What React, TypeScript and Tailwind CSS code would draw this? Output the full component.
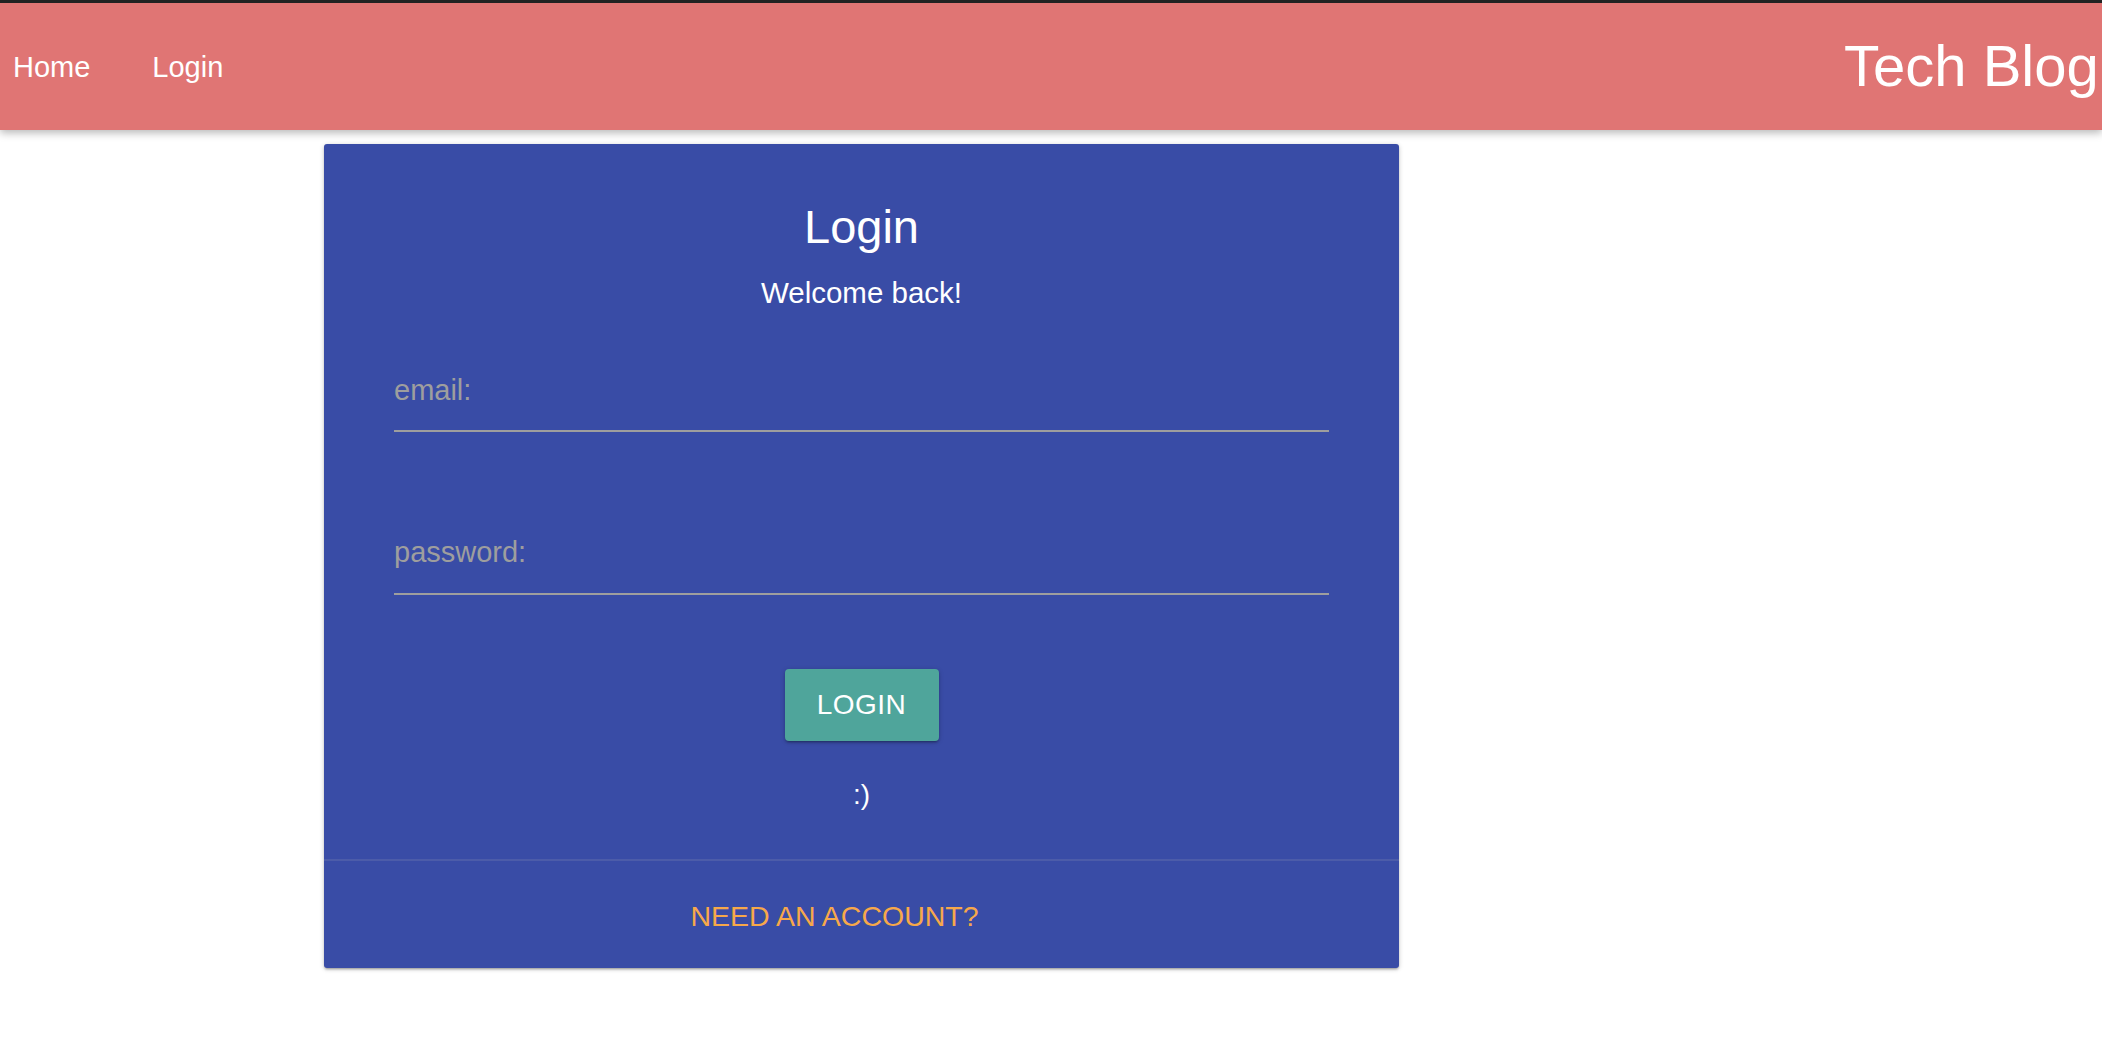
export default function App() {
  const font = { fontFamily: "'Liberation Sans', Arial, sans-serif" };

  return (
    <div className="min-h-[1044px] w-full overflow-hidden bg-white text-white" style={font}>
      <nav className="relative z-10 flex h-[130px] items-center overflow-hidden border-t-[3px] border-[#222222] bg-[#e07574] shadow-[0_3px_8px_rgba(0,0,0,0.28)]">
        <div className="flex items-center gap-[62px] pl-[13px] text-[29px] leading-[34px]">
          <a href="#">Home</a>
          <a href="#">Login</a>
        </div>
        <div className="ml-auto w-[258px] shrink-0 overflow-hidden whitespace-nowrap pb-[2px] text-[58px] leading-[70px]">
          Tech Blog
        </div>
      </nav>

      <div className="ml-[324px] mt-[14px] w-[1075px] rounded-[3px] bg-[#394ca6] shadow-[0_2px_2px_0_rgba(0,0,0,0.14),0_3px_1px_-2px_rgba(0,0,0,0.12),0_1px_5px_0_rgba(0,0,0,0.2)]">
        <div className="flex flex-col items-center px-[70px] pt-[55px]">
          <h5 className="text-[47px] leading-[56px] font-normal">Login</h5>
          <p className="mt-[21px] text-[29.5px] leading-[34px]">Welcome back!</p>

          <div className="mt-[63px] w-full border-b-2 border-[#9e9e9e] pb-[23px]">
            <span className="text-[29px] leading-[34px] text-[#9e9e9e]">email:</span>
          </div>
          <div className="mt-[103px] w-full border-b-2 border-[#9e9e9e] pb-[24px]">
            <span className="text-[29px] leading-[34px] text-[#9e9e9e]">password:</span>
          </div>

          <button className="mt-[74px] flex h-[72px] w-[154px] items-center justify-center rounded-[4px] bg-[#4fa59b] text-[28px] tracking-[0.5px] shadow-[0_2px_2px_0_rgba(0,0,0,0.14),0_3px_1px_-2px_rgba(0,0,0,0.12),0_1px_5px_0_rgba(0,0,0,0.2)]">
            LOGIN
          </button>

          <p className="mt-[37px] text-[28px] leading-[34px]">:)</p>
        </div>

        <div className="mt-[47px] border-t-2 border-[#4c5ca9] pb-[35px] pt-[38px] pr-[54px] text-center">
          <a href="#" className="text-[28.5px] leading-[34px] text-[#f7a84a]">
            NEED AN ACCOUNT?
          </a>
        </div>
      </div>
    </div>
  );
}
